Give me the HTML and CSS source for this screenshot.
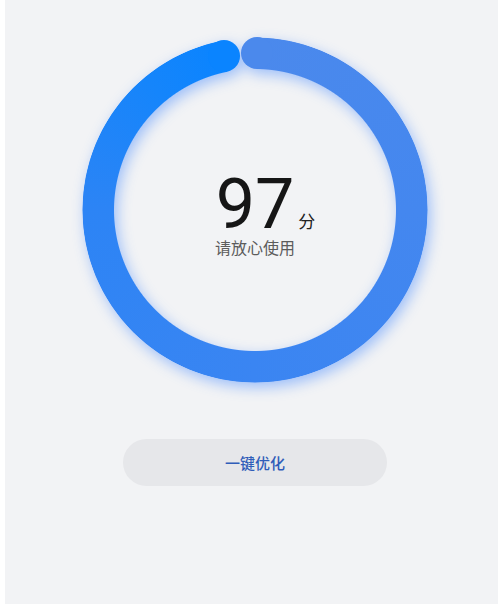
FILE: index.html
```html
<!DOCTYPE html>
<html lang="zh-CN">
<head>
<meta charset="utf-8">
<title>一键优化</title>
<link rel="stylesheet" href="styles.css">
</head>
<body>
<main class="screen">
  <section class="gauge">
    <div class="glow">
      <div class="ring"></div>
      <span class="cap cap-start"></span>
      <span class="cap cap-end"></span>
    </div>
    <div class="score">
      <div class="value">97<span class="unit">分</span></div>
      <div class="label">请放心使用</div>
    </div>
  </section>
  <button class="optimize" type="button">一键优化</button>
</main>
</body>
</html>
```
FILE: styles.css
```css
html, body {
  margin: 0;
  padding: 0;
  background: #ffffff;
}
body {
  width: 499px;
  height: 604px;
  overflow: hidden;
  font-family: "Noto Sans CJK SC", "Noto Sans", sans-serif;
}
.screen {
  margin-left: 5px;
  width: 493px;
  height: 604px;
  background: #f2f3f5;
  display: flex;
  flex-direction: column;
  align-items: center;
  padding-left: 7px;
  padding-top: 37px;
  box-sizing: border-box;
}
.gauge {
  width: 346px;
  height: 346px;
  display: grid;
}
.glow,
.score {
  grid-area: 1 / 1;
}
.glow {
  position: relative;
  filter: drop-shadow(3px 5px 7px rgba(40, 120, 255, 0.42));
}
.ring {
  width: 346px;
  height: 346px;
  border-radius: 50%;
  background: conic-gradient(
    from 0.7deg,
    #4b89ec 0deg,
    #4487ef 90deg,
    #3a85f2 180deg,
    #2c84f5 270deg,
    #1585fb 320deg,
    #0a84ff 347.9deg,
    transparent 347.9deg
  );
  -webkit-mask: radial-gradient(closest-side, transparent 140.5px, #000 141.5px, #000 172px, transparent 173px);
  mask: radial-gradient(closest-side, transparent 140.5px, #000 141.5px, #000 172px, transparent 173px);
}
.cap {
  position: absolute;
  width: 32px;
  height: 32px;
  border-radius: 50%;
}
.cap-start {
  left: 159px;
  top: 0;
  background: #4b89ec;
}
.cap-end {
  left: 126px;
  top: 3px;
  background: #0a84ff;
}
.score {
  display: flex;
  flex-direction: column;
  align-items: center;
  justify-content: center;
  padding-top: 12px;
}
.value {
  font-family: Roboto, "Liberation Sans", sans-serif;
  font-weight: 400;
  font-size: 70px;
  line-height: 56px;
  color: #161616;
  white-space: nowrap;
}
.unit {
  font-family: "Noto Sans CJK SC", sans-serif;
  font-weight: 400;
  font-size: 17px;
  line-height: 1;
  margin-left: 4px;
  margin-right: -21px;
  color: #222;
}
.label {
  margin-top: 6px;
  font-size: 16px;
  line-height: 18px;
  color: #5c5c5c;
}
.optimize {
  margin-top: 56px;
  width: 264px;
  height: 47px;
  border: none;
  border-radius: 24px;
  background: #e6e7ea;
  color: #2f5db9;
  font-family: "Noto Sans CJK SC", sans-serif;
  font-weight: 500;
  font-size: 15px;
  padding: 0;
}
```
